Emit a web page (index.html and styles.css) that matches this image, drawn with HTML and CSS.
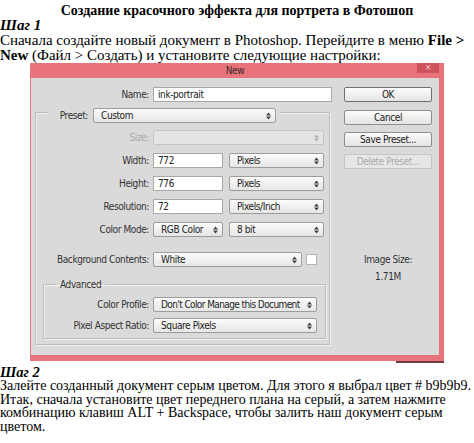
FILE: index.html
```html
<!DOCTYPE html>
<html lang="ru">
<head>
<meta charset="utf-8">
<title>Создание красочного эффекта для портрета в Фотошоп</title>
<link rel="stylesheet" href="styles.css">
</head>
<body>
<header class="intro">
  <h1 class="title">Создание красочного эффекта для портрета в Фотошоп</h1>
  <h2 class="step">Шаг 1</h2>
  <p class="text">Сначала создайте новый документ в Photoshop. Перейдите в меню <b>File &gt;</b><br><b>New</b> (Файл &gt; Создать) и установите следующие настройки:</p>
</header>

<div class="dialog">
  <div class="titlebar"><span class="tb-title">New</span><span class="close">×</span></div>
  <div class="dlg-body">
    <div class="form">
      <div class="row name-row">
        <span class="lbl lbl-name">Name:</span>
        <div class="input w-name">ink-portrait</div>
      </div>
      <div class="group">
        <div class="preset-row">
          <span class="lbl lbl-preset">Preset:</span>
          <div class="select w-preset"><span>Custom</span><svg class="arr" viewBox="0 0 5 8" width="5" height="8"><path d="M0 3.4 2.5 0.4 5 3.4Z M0 4.6 2.5 7.6 5 4.6Z"/></svg></div>
        </div>
        <div class="row grow first">
          <span class="lbl lbl-g disabled">Size:</span>
          <div class="select w-size is-disabled"><span></span><svg class="arr" viewBox="0 0 5 8" width="5" height="8"><path d="M0 3.4 2.5 0.4 5 3.4Z M0 4.6 2.5 7.6 5 4.6Z"/></svg></div>
        </div>
        <div class="row grow">
          <span class="lbl lbl-g">Width:</span>
          <div class="pair">
            <div class="input w-small">772</div>
            <div class="select w-unit"><span>Pixels</span><svg class="arr" viewBox="0 0 5 8" width="5" height="8"><path d="M0 3.4 2.5 0.4 5 3.4Z M0 4.6 2.5 7.6 5 4.6Z"/></svg></div>
          </div>
        </div>
        <div class="row grow">
          <span class="lbl lbl-g">Height:</span>
          <div class="pair">
            <div class="input w-small">776</div>
            <div class="select w-unit"><span>Pixels</span><svg class="arr" viewBox="0 0 5 8" width="5" height="8"><path d="M0 3.4 2.5 0.4 5 3.4Z M0 4.6 2.5 7.6 5 4.6Z"/></svg></div>
          </div>
        </div>
        <div class="row grow">
          <span class="lbl lbl-g">Resolution:</span>
          <div class="pair">
            <div class="input w-small">72</div>
            <div class="select w-unit"><span>Pixels/Inch</span><svg class="arr" viewBox="0 0 5 8" width="5" height="8"><path d="M0 3.4 2.5 0.4 5 3.4Z M0 4.6 2.5 7.6 5 4.6Z"/></svg></div>
          </div>
        </div>
        <div class="row grow">
          <span class="lbl lbl-g">Color Mode:</span>
          <div class="pair">
            <div class="select w-small"><span>RGB Color</span><svg class="arr" viewBox="0 0 5 8" width="5" height="8"><path d="M0 3.4 2.5 0.4 5 3.4Z M0 4.6 2.5 7.6 5 4.6Z"/></svg></div>
            <div class="select w-unit"><span>8 bit</span><svg class="arr" viewBox="0 0 5 8" width="5" height="8"><path d="M0 3.4 2.5 0.4 5 3.4Z M0 4.6 2.5 7.6 5 4.6Z"/></svg></div>
          </div>
        </div>
        <div class="row grow bg-row">
          <span class="lbl lbl-g">Background Contents:</span>
          <div class="pair narrow">
            <div class="select w-bg"><span>White</span><svg class="arr" viewBox="0 0 5 8" width="5" height="8"><path d="M0 3.4 2.5 0.4 5 3.4Z M0 4.6 2.5 7.6 5 4.6Z"/></svg></div>
            <div class="swatch"></div>
          </div>
        </div>
        <fieldset class="advanced">
          <legend class="adv-legend">Advanced</legend>
          <div class="row arow">
            <span class="lbl lbl-a">Color Profile:</span>
            <div class="select w-adv tight"><span>Don't Color Manage this Document</span><svg class="arr" viewBox="0 0 5 8" width="5" height="8"><path d="M0 3.4 2.5 0.4 5 3.4Z M0 4.6 2.5 7.6 5 4.6Z"/></svg></div>
          </div>
          <div class="row arow second">
            <span class="lbl lbl-a">Pixel Aspect Ratio:</span>
            <div class="select w-adv"><span>Square Pixels</span><svg class="arr" viewBox="0 0 5 8" width="5" height="8"><path d="M0 3.4 2.5 0.4 5 3.4Z M0 4.6 2.5 7.6 5 4.6Z"/></svg></div>
          </div>
        </fieldset>
      </div>
    </div>
    <div class="side">
      <div class="btn btn-default">OK</div>
      <div class="btn">Cancel</div>
      <div class="btn">Save Preset...</div>
      <div class="btn btn-disabled">Delete Preset...</div>
      <div class="imgsize">
        <div>Image Size:</div>
        <div>1.71M</div>
      </div>
    </div>
  </div>
</div>
<div class="dlg-shadow"></div>

<section class="outro">
  <h2 class="step">Шаг 2</h2>
  <p class="text">Залейте созданный документ серым цветом. Для этого я выбрал цвет # b9b9b9.<br>Итак, сначала установите цвет переднего плана на серый, а затем нажмите<br>комбинацию клавиш ALT + Backspace, чтобы залить наш документ серым<br>цветом.</p>
</section>
</body>
</html>
```

FILE: styles.css
```css
* { box-sizing: border-box; }

html, body {
  margin: 0;
  padding: 0;
  background: #ffffff;
}

body {
  width: 474px;
  height: 443px;
  overflow: hidden;
  font-family: "Liberation Serif", "Times New Roman", serif;
  color: #000;
}

/* ---------- article text ---------- */
.intro {
  padding-top: 3px;
  font-size: 15px;
  line-height: 15px;
}

.title {
  margin: 0;
  font-size: 14px;
  line-height: 15px;
  font-weight: bold;
  text-align: center;
  white-space: nowrap;
}

.step {
  margin: 0;
  font-size: 15px;
  line-height: 15px;
  font-weight: bold;
  font-style: italic;
}

.text {
  margin: 0;
  white-space: nowrap;
}

.outro {
  margin-top: 2px;
  font-size: 14px;
  line-height: 13.5px;
}

.outro .step {
  font-size: 14.5px;
  line-height: 14px;
}

/* ---------- dialog ---------- */
.dialog {
  margin-left: 30px;
  width: 414px;
  height: 298px;
  display: flex;
  flex-direction: column;
  background: #dadada;
  border-style: solid;
  border-color: #e8737a;
  border-width: 0 5px 6px 1px;
  font-family: "DejaVu Sans Condensed", "DejaVu Sans", sans-serif;
  font-size: 10px;
  letter-spacing: -0.4px;
  color: #333;
}

.titlebar {
  height: 15px;
  flex: none;
  display: grid;
  grid-template-columns: 1fr auto 1fr;
  background: #e8737a;
}

.tb-title {
  grid-column: 2;
  line-height: 15px;
  font-size: 10px;
  color: #3a2a2a;
}

.close {
  grid-column: 3;
  justify-self: end;
  width: 22px;
  height: 10px;
  background: #d0525c;
  color: #f4d6d8;
  font-size: 9px;
  line-height: 9px;
  text-align: center;
}

.dlg-shadow {
  margin-left: 396px;
  width: 48px;
  height: 2px;
  background: #6d3d43;
}

.dlg-body {
  flex: 1;
  display: flex;
}

.form {
  width: 302px;
  padding-top: 9px;
}

.row {
  display: flex;
  align-items: center;
  gap: 4px;
  height: 15px;
}

.lbl {
  flex: none;
  text-align: right;
  line-height: 15px;
  white-space: nowrap;
  color: #333;
}

.lbl-name { width: 118px; }
.lbl-g { width: 113px; }
.lbl-a { width: 105px; }
.lbl-preset { width: 40px; }

.disabled { color: #a8a8a8; }

.input,
.select {
  height: 15px;
  line-height: 13px;
  white-space: nowrap;
  overflow: hidden;
  color: #222;
}

.input {
  padding-left: 4px;
  background: #fff;
  border: 1px solid #a9a9a9;
}

.select {
  display: flex;
  align-items: center;
  justify-content: space-between;
  padding: 0 4px 0 7px;
  border: 1px solid #9c9c9c;
  border-radius: 2px;
  background: linear-gradient(#fbfbfb, #e6e6e6);
}

.select.tight {
  letter-spacing: -0.6px;
}

.arr {
  flex: none;
  fill: #444;
}

.select.is-disabled {
  border-color: #c6c6c6;
  background: #e4e4e4;
}

.select.is-disabled .arr { fill: #b0b0b0; }

.w-name { width: 179px; }
.w-preset { width: 183px; }
.w-size { width: 171px; }
.w-small { width: 70px; }
.w-unit { width: 95px; }
.w-bg { width: 149px; }
.w-adv { width: 164px; }

.pair {
  display: flex;
  align-items: center;
  gap: 6px;
}

.pair.narrow { gap: 4px; }

.swatch {
  width: 11px;
  height: 11px;
  background: #fff;
  border: 1px solid #b4b4b4;
}

/* group boxes */
.group {
  margin: 10px 0 0 4px;
  width: 295px;
  padding-bottom: 5px;
  border: 1px solid #bdbdbd;
  box-shadow: inset 1px 1px 0 #f0f0f0, 1px 1px 0 #f0f0f0;
}

.preset-row {
  display: flex;
  align-items: center;
  gap: 5px;
  width: max-content;
  height: 15px;
  margin: -5px 0 0 12px;
  padding-right: 4px;
  background: #dadada;
}

.grow { margin-top: 8px; }
.grow.first { margin-top: 7px; }
.grow.bg-row { margin-top: 15px; }

.advanced {
  margin: 11px 0 0 7px;
  width: 283px;
  min-width: 0;
  padding: 6px 0 5px 0;
  border: 1px solid #bdbdbd;
  box-shadow: inset 1px 1px 0 #f0f0f0, 1px 1px 0 #f0f0f0;
}

.adv-legend {
  margin-left: 12px;
  padding: 0 4px;
  line-height: 13px;
  color: #333;
}

.arow.second { margin-top: 6px; }

/* right column */
.side {
  width: 88px;
  margin-left: 11px;
  padding-top: 9px;
  display: flex;
  flex-direction: column;
}

.btn {
  height: 15px;
  line-height: 13px;
  text-align: center;
  color: #222;
  border: 1px solid #8e8e8e;
  border-radius: 2px;
  background: linear-gradient(#fbfbfb, #e4e4e4);
  margin-bottom: 7px;
  white-space: nowrap;
}

.btn-default {
  border-color: #6f6f6f;
  margin-bottom: 8px;
}

.btn-disabled {
  color: #ababab;
  border-color: #c4c4c4;
  background: #e6e6e6;
}

.imgsize {
  margin-top: 75px;
  text-align: center;
  line-height: 17px;
  color: #333;
}
```
